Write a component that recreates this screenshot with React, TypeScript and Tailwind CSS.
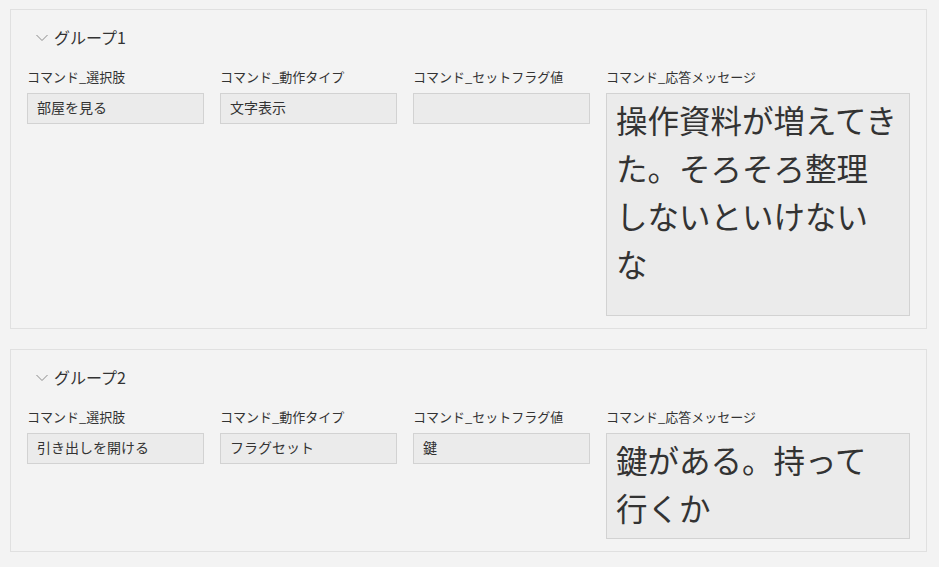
import React from 'react'

type Group = {
  title: string
  choice: string
  action: string
  flag: string
  message: string[]
  messageHeight: string
}

const groups: Group[] = [
  {
    title: 'グループ1',
    choice: '部屋を見る',
    action: '文字表示',
    flag: '',
    message: ['操作資料が増えてき', 'た。そろそろ整理', 'しないといけない', 'な'],
    messageHeight: 'h-[223px]',
  },
  {
    title: 'グループ2',
    choice: '引き出しを開ける',
    action: 'フラグセット',
    flag: '鍵',
    message: ['鍵がある。持って', '行くか'],
    messageHeight: 'h-[106px]',
  },
]

const Field: React.FC<{ label: string; value: string }> = ({ label, value }) => (
  <div className="w-[177px] shrink-0">
    <div className="text-[13px] leading-[18px] text-[#333]">{label}</div>
    <div className="mt-[7px] h-[31px] border border-[#d2d2d2] bg-[#ebebeb] px-[9px] pb-[2px] text-[14px] leading-[27px] text-[#333]">
      {value}
    </div>
  </div>
)

const GroupCard: React.FC<{ group: Group }> = ({ group }) => (
  <div className="border border-[#e0e0e0] bg-[#f3f3f3] pl-[16px] pr-[16px] pt-[16px] pb-[12px]">
    <div className="flex items-center gap-[6px] pl-[9px] text-[16px] leading-[22px] text-[#333]">
      <svg width="12" height="8" viewBox="0 0 12 8" fill="none" className="mt-[1px]">
        <path d="M0.5 1 L6 6.5 L11.5 1" stroke="#8a8a8a" strokeWidth="1" />
      </svg>
      <span>{group.title}</span>
    </div>
    <div className="mt-[20px] flex gap-[16px]">
      <Field label="コマンド_選択肢" value={group.choice} />
      <Field label="コマンド_動作タイプ" value={group.action} />
      <Field label="コマンド_セットフラグ値" value={group.flag} />
      <div className="flex-1">
        <div className="text-[13px] leading-[18px] text-[#333]">コマンド_応答メッセージ</div>
        <div
          className={`mt-[7px] ${group.messageHeight} border border-[#d2d2d2] bg-[#ebebeb] pl-[9px] pr-[4px] pt-[1px] text-[31.5px] leading-[48px] text-[#333] whitespace-nowrap`}
        >
          {group.message.map((line) => (
            <div key={line}>{line}</div>
          ))}
        </div>
      </div>
    </div>
  </div>
)

const App: React.FC = () => {
  return (
    <div
      className="min-h-[567px] bg-[#f3f3f3] pl-[10px] pr-[12px] pt-[9px]"
      style={{ fontFamily: '"Noto Sans CJK JP", "Noto Sans", sans-serif' }}
    >
      <div className="flex flex-col gap-[20px]">
        {groups.map((g) => (
          <GroupCard key={g.title} group={g} />
        ))}
      </div>
    </div>
  )
}

export default App
